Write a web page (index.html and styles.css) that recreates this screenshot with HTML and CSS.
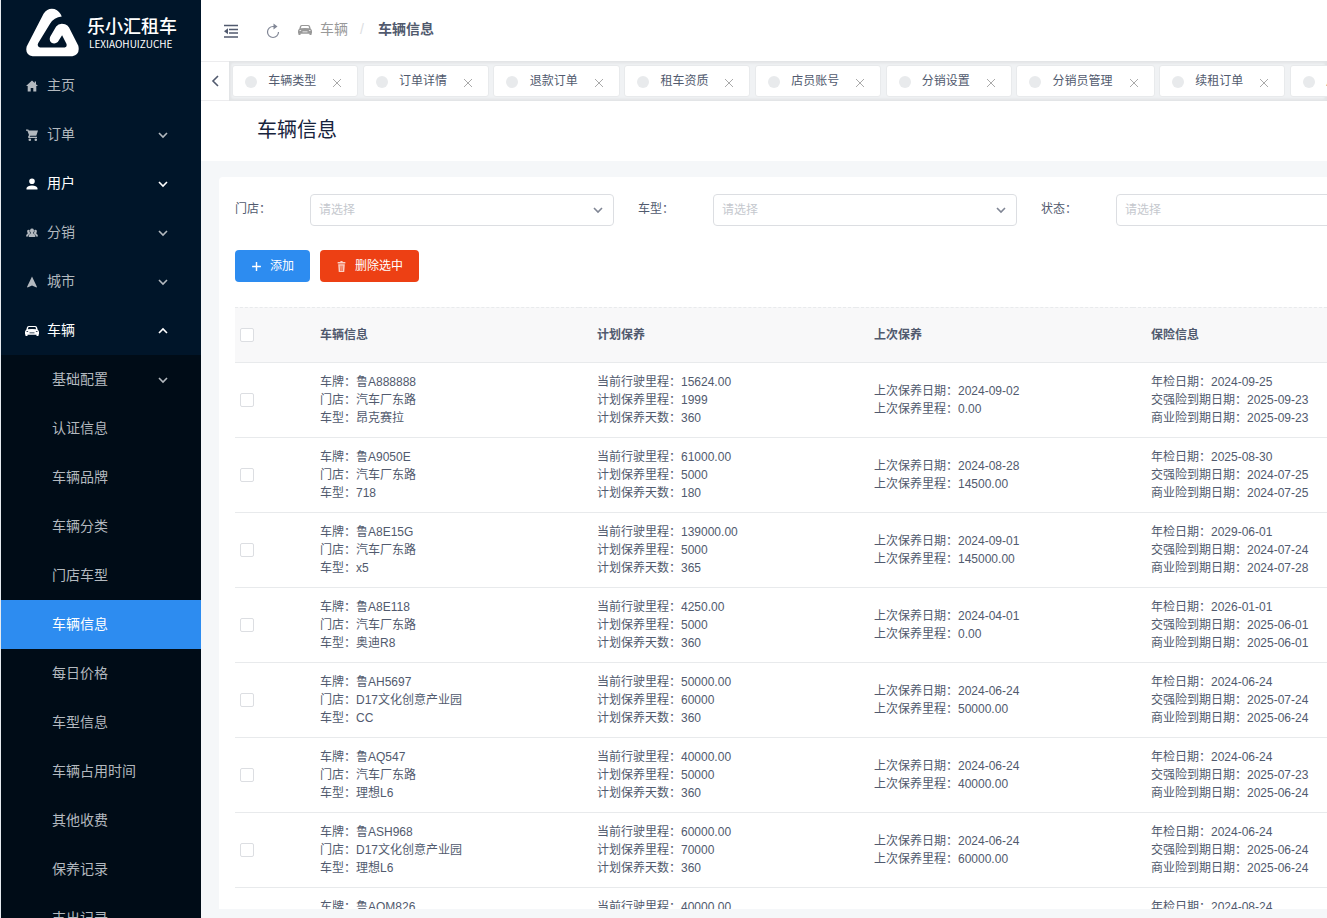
FILE: index.html
```html
<!DOCTYPE html>
<html lang="zh-CN">
<head>
<meta charset="utf-8">
<title>车辆信息</title>
<link rel="stylesheet" href="styles.css">
</head>
<body>
<svg class="sprite" aria-hidden="true">
  <symbol id="chevron" viewBox="0 0 12 12"><path d="M2 4l4 4 4-4" fill="none" stroke="currentColor" stroke-width="1.6"/></symbol>
  <symbol id="close" viewBox="0 0 10 10"><path d="M1 1l8 8M9 1L1 9" fill="none" stroke="currentColor"/></symbol>
  <symbol id="car" viewBox="0 0 14 12"><path fill="currentColor" fill-rule="evenodd" d="M4 1h6q1.500 0 2 1.200L12.800 5q1.200.6 1.200 2v2.500h-.5V11h-2V9.800H2.500V11h-2V9.500H0V7q0-1.400 1.200-2L2 2.200Q2.500 1 4 1zM3.600 2L2.800 4.300Q7 3.500 11.200 4.300L10.400 2zM1.500 6.200v.9h1.600v-.9zM10.900 6.200v.9h1.600v-.9zM4.500 7.500v.7h5v-.7z"/></symbol>
</svg>
<div class="app">
  <aside class="sidebar">
    <div class="logo">
      <svg class="logo-mark" viewBox="18 10 160 148"><path fill="#fff" d="M71 27Q84 8 104 13Q120 19 126 36Q102 39 91 57L55 116Q50 126 60 129L135 129Q143 127 140 118L127 92L114 113Q104 121 94 114Q87 108 91 97L109 66Q118 54 136 59Q144 62 148 69L176 124Q182 150 158 156L38 156Q14 152 20 126Z"/></svg>
      <div class="logo-text"><strong>乐小汇租车</strong><span>LEXIAOHUIZUCHE</span></div>
    </div>
    <nav>
      <ul class="menu">
        <li><a href="#"><svg class="mi" viewBox="-1 -1 14 14"><path fill="currentColor" d="M6 .5L0 6h1.700v5.500h3V8h2.600v3.500h3V6H12L10 4.200V1.500H8.700V3z"/></svg>主页</a></li>
        <li><a href="#"><svg class="mi" viewBox="-1 -1 14 14"><path fill="currentColor" d="M0 .5h2.300l.5 1.100H12L10.300 6.700H4.200L3.700 7.800H11V9H2.500L2 8l1-2L1.400 1.700H0zM3.800 9.400a1.300 1.300 0 110 2.600 1.300 1.300 0 010-2.600zM9.800 9.400a1.300 1.300 0 110 2.600 1.300 1.300 0 010-2.600z"/></svg>订单<svg class="arrow"><use href="#chevron"/></svg></a></li>
        <li class="open"><a href="#"><svg class="mi" viewBox="-1 -1 14 14"><path fill="currentColor" d="M6 .5a2.800 2.800 0 110 5.600 2.800 2.800 0 010-5.600zM.5 11.500V10Q1.500 7.500 6 7.500T11.500 10v1.500z"/></svg>用户<svg class="arrow"><use href="#chevron"/></svg></a></li>
        <li><a href="#"><svg class="mi" viewBox="-1 -1 14 14"><path fill="currentColor" d="M6 1.500a2 2.200 0 011.300 3.900v1.200q2 .5 2 3.400H2.700q0-2.900 2-3.400V5.400A2 2.200 0 016 1.500zM2.600 2.700q.7 0 1.100.4-.5 1.600.4 2.900v.5Q2.300 7.300 2.100 9.500H0Q0 7.300 1.600 6.800V6Q.3 3 2.600 2.700zM9.400 2.700q-.7 0-1.100.4.500 1.600-.4 2.900v.5q1.800.8 2 3H12q0-2.200-1.600-2.700V6Q11.700 3 9.400 2.700z"/></svg>分销<svg class="arrow"><use href="#chevron"/></svg></a></li>
        <li><a href="#"><svg class="mi" viewBox="-1 -1 14 14"><path fill="currentColor" d="M6 .5L11 11l-.5.500L6 9.500l-4.500 2L1 11z"/></svg>城市<svg class="arrow"><use href="#chevron"/></svg></a></li>
        <li class="open"><a href="#"><svg class="mi"><use href="#car"/></svg>车辆<svg class="arrow up"><use href="#chevron"/></svg></a>
          <ul class="submenu">
            <li><a href="#">基础配置<svg class="arrow"><use href="#chevron"/></svg></a></li>
            <li><a href="#">认证信息</a></li>
            <li><a href="#">车辆品牌</a></li>
            <li><a href="#">车辆分类</a></li>
            <li><a href="#">门店车型</a></li>
            <li class="active"><a href="#">车辆信息</a></li>
            <li><a href="#">每日价格</a></li>
            <li><a href="#">车型信息</a></li>
            <li><a href="#">车辆占用时间</a></li>
            <li><a href="#">其他收费</a></li>
            <li><a href="#">保养记录</a></li>
            <li><a href="#">支出记录</a></li>
          </ul>
        </li>
      </ul>
    </nav>
  </aside>
  <main class="main">
    <header class="topbar">
      <button class="icon-btn" aria-label="收起菜单"><svg width="16" height="14" viewBox="0 0 16 14"><path d="M1 1.500h14M6 5.500h9M6 9h9M1 13h14" fill="none" stroke="currentColor" stroke-width="1.400"/><path d="M1 7.200l4-3v6z" fill="currentColor"/></svg></button>
      <button class="icon-btn refresh" aria-label="刷新"><svg width="14" height="16" viewBox="0 0 14 16"><path d="M8 3.500H7A5.500 5.500 0 1012.500 9" fill="none" stroke="currentColor" stroke-width="1.200"/><path d="M7.500.5l4 3-4 3z" fill="currentColor"/></svg></button>
      <nav class="crumbs"><svg width="14" height="12"><use href="#car"/></svg><span>车辆</span><i>/</i><b>车辆信息</b></nav>
    </header>
    <div class="tabs">
      <button class="tabs-prev" aria-label="向左"><svg width="9" height="12" viewBox="0 0 9 12"><path d="M7 1L2 6l5 5" fill="none" stroke="currentColor" stroke-width="1.600"/></svg></button>
      <div class="tabs-list">
        <div class="tab"><i></i> <span>车辆类型</span><button aria-label="关闭"><svg><use href="#close"/></svg></button></div>
        <div class="tab"><i></i> <span>订单详情</span><button aria-label="关闭"><svg><use href="#close"/></svg></button></div>
        <div class="tab"><i></i> <span>退款订单</span><button aria-label="关闭"><svg><use href="#close"/></svg></button></div>
        <div class="tab"><i></i> <span>租车资质</span><button aria-label="关闭"><svg><use href="#close"/></svg></button></div>
        <div class="tab"><i></i> <span>店员账号</span><button aria-label="关闭"><svg><use href="#close"/></svg></button></div>
        <div class="tab"><i></i> <span>分销设置</span><button aria-label="关闭"><svg><use href="#close"/></svg></button></div>
        <div class="tab"><i></i> <span>分销员管理</span><button aria-label="关闭"><svg><use href="#close"/></svg></button></div>
        <div class="tab"><i></i> <span>续租订单</span><button aria-label="关闭"><svg><use href="#close"/></svg></button></div>
        <div class="tab"><i></i> <span>用户列表</span><button aria-label="关闭"><svg><use href="#close"/></svg></button></div>
      </div>
    </div>
    <h1 class="title">车辆信息</h1>
    <div class="content">
      <section class="card">
        <form class="filters">
          <div class="field"><label for="store">门店：</label><div class="select"><select id="store"><option>请选择</option></select><svg><use href="#chevron"/></svg></div></div>
          <div class="field"><label for="model">车型：</label><div class="select"><select id="model"><option>请选择</option></select><svg><use href="#chevron"/></svg></div></div>
          <div class="field"><label for="state">状态：</label><div class="select"><select id="state"><option>请选择</option></select><svg><use href="#chevron"/></svg></div></div>
        </form>
        <div class="actions">
          <button class="btn primary"><svg viewBox="0 0 10 10"><path d="M5 1v8M1 5h8" stroke="currentColor" stroke-width="1.300"/></svg>添加</button>
          <button class="btn danger"><svg viewBox="0 0 10 10"><path fill="currentColor" fill-opacity=".75" fill-rule="evenodd" d="M1.500 1H4V0h2v1h2.500v1.200h-7zM2 3h6l-.5 7h-5zM3.500 4l.2 5h.5L4 4zM4.800 4v5h.4V4zM6 4l-.2 5h.5l.2-5z"/></svg>删除选中</button>
        </div>
        <table class="table">
          <colgroup><col class="c-check"><col class="c-data"><col class="c-data"><col class="c-data"><col></colgroup>
          <thead><tr><th><input type="checkbox" aria-label="全选"></th><th>车辆信息</th><th>计划保养</th><th>上次保养</th><th>保险信息</th></tr></thead>
          <tbody>
            <tr><td><input type="checkbox" aria-label="选择"></td><td>车牌：鲁A888888<br>门店：汽车厂东路<br>车型：昂克赛拉</td><td>当前行驶里程：15624.00<br>计划保养里程：1999<br>计划保养天数：360</td><td>上次保养日期：2024-09-02<br>上次保养里程：0.00</td><td>年检日期：2024-09-25<br>交强险到期日期：2025-09-23<br>商业险到期日期：2025-09-23</td></tr>
            <tr><td><input type="checkbox" aria-label="选择"></td><td>车牌：鲁A9050E<br>门店：汽车厂东路<br>车型：718</td><td>当前行驶里程：61000.00<br>计划保养里程：5000<br>计划保养天数：180</td><td>上次保养日期：2024-08-28<br>上次保养里程：14500.00</td><td>年检日期：2025-08-30<br>交强险到期日期：2024-07-25<br>商业险到期日期：2024-07-25</td></tr>
            <tr><td><input type="checkbox" aria-label="选择"></td><td>车牌：鲁A8E15G<br>门店：汽车厂东路<br>车型：x5</td><td>当前行驶里程：139000.00<br>计划保养里程：5000<br>计划保养天数：365</td><td>上次保养日期：2024-09-01<br>上次保养里程：145000.00</td><td>年检日期：2029-06-01<br>交强险到期日期：2024-07-24<br>商业险到期日期：2024-07-28</td></tr>
            <tr><td><input type="checkbox" aria-label="选择"></td><td>车牌：鲁A8E118<br>门店：汽车厂东路<br>车型：奥迪R8</td><td>当前行驶里程：4250.00<br>计划保养里程：5000<br>计划保养天数：360</td><td>上次保养日期：2024-04-01<br>上次保养里程：0.00</td><td>年检日期：2026-01-01<br>交强险到期日期：2025-06-01<br>商业险到期日期：2025-06-01</td></tr>
            <tr><td><input type="checkbox" aria-label="选择"></td><td>车牌：鲁AH5697<br>门店：D17文化创意产业园<br>车型：CC</td><td>当前行驶里程：50000.00<br>计划保养里程：60000<br>计划保养天数：360</td><td>上次保养日期：2024-06-24<br>上次保养里程：50000.00</td><td>年检日期：2024-06-24<br>交强险到期日期：2025-07-24<br>商业险到期日期：2025-06-24</td></tr>
            <tr><td><input type="checkbox" aria-label="选择"></td><td>车牌：鲁AQ547<br>门店：汽车厂东路<br>车型：理想L6</td><td>当前行驶里程：40000.00<br>计划保养里程：50000<br>计划保养天数：360</td><td>上次保养日期：2024-06-24<br>上次保养里程：40000.00</td><td>年检日期：2024-06-24<br>交强险到期日期：2025-07-23<br>商业险到期日期：2025-06-24</td></tr>
            <tr><td><input type="checkbox" aria-label="选择"></td><td>车牌：鲁ASH968<br>门店：D17文化创意产业园<br>车型：理想L6</td><td>当前行驶里程：60000.00<br>计划保养里程：70000<br>计划保养天数：360</td><td>上次保养日期：2024-06-24<br>上次保养里程：60000.00</td><td>年检日期：2024-06-24<br>交强险到期日期：2025-06-24<br>商业险到期日期：2025-06-24</td></tr>
            <tr><td><input type="checkbox" aria-label="选择"></td><td>车牌：鲁AQM826<br>门店：汽车厂东路<br>车型：理想L6</td><td>当前行驶里程：40000.00<br>计划保养里程：50000<br>计划保养天数：360</td><td>上次保养日期：2024-06-24<br>上次保养里程：40000.00</td><td>年检日期：2024-08-24<br>交强险到期日期：2025-06-24<br>商业险到期日期：2025-06-24</td></tr>
          </tbody>
        </table>
      </section>
    </div>
  </main>
</div>
</body>
</html>
```
FILE: styles.css
```css
* { box-sizing: border-box; }
body {
  margin: 0;
  color: #515a6e;
  background: #f5f7f9;
  font: 12px/18px "Liberation Sans", "Noto Sans CJK SC", sans-serif;
}
button, select, input { font: inherit; color: inherit; margin: 0; }
button { border: 0; background: none; padding: 0; cursor: pointer; }
ul { list-style: none; margin: 0; padding: 0; }
a { color: inherit; text-decoration: none; }
.sprite { display: none; }

.app { display: flex; height: 100vh; overflow: hidden; }

/* Sidebar */
.sidebar {
  flex: none;
  width: 201px;
  border-left: 1px solid #e6ebf0;
  background: #001529;
  color: #b3b9bf;
  font-size: 14px;
  overflow: hidden;
}
.logo { display: flex; align-items: center; gap: 8px; height: 61px; padding: 3px 0 0 25px; color: #fff; }
.logo-mark { width: 53px; height: 49px; }
.logo-text { display: flex; flex-direction: column; font-family: "Noto Sans CJK SC", sans-serif; }
.logo-text strong { font-size: 18px; line-height: 24px; font-weight: 500; }
.logo-text span { padding-left: 2px; font-size: 10px; line-height: 14px; font-weight: 400; }
.menu a { display: flex; align-items: center; height: 49px; padding: 0 32px 2px 24px; }
.mi { width: 14px; height: 14px; margin: 2px 8px 0 0; }
.arrow { width: 12px; height: 12px; margin: 2px 0 0 auto; }
.arrow.up { transform: rotate(180deg); }
.open > a { color: #fff; }
.submenu { background: #000c17; }
.submenu a { padding-left: 51px; }
.submenu .active a { background: #2d8cf0; color: #fff; }

/* Top area */
.main { flex: 1; min-width: 0; display: flex; flex-direction: column; overflow: hidden; }
.topbar { flex: none; display: flex; align-items: center; height: 61px; padding-left: 22px; background: #fff; }
.icon-btn { display: flex; }
.refresh { margin-left: 27px; color: #808695; }
.crumbs { display: flex; align-items: center; margin-left: 18px; padding-bottom: 3px; font-size: 14px; color: #999; }
.crumbs svg { margin-top: 2px; }
.crumbs span { margin-left: 8px; }
.crumbs i { margin: 0 14px 0 12px; font-style: normal; color: #dcdee2; }
.crumbs b { color: #515a6e; }

.tabs { flex: none; display: flex; height: 40px; background: #f0f2f4; }
.tabs-prev {
  flex: none;
  display: flex;
  align-items: center;
  justify-content: center;
  width: 28px;
  border: solid #ececee;
  border-width: 1px 0;
  background: #fff;
}
.tabs-list {
  flex: 1;
  min-width: 0;
  padding: 4px 3px;
  white-space: nowrap;
  overflow: hidden;
  box-shadow: inset 0 0 3px 2px rgba(100, 100, 100, .1);
}
.tab {
  display: inline-block;
  height: 32px;
  margin-right: 1px;
  padding: 0 12px;
  border: 1px solid #e8eaec;
  border-radius: 3px;
  background: #fff;
  line-height: 30px;
  vertical-align: top;
}
.tab i {
  display: inline-block;
  width: 12px;
  height: 12px;
  margin-right: 8px;
  border-radius: 50%;
  background: #e8eaec;
  vertical-align: middle;
}
.tab button { width: 16px; height: 16px; margin-left: 13px; color: #aaa; line-height: 16px; vertical-align: middle; }
.tab svg { display: block; width: 10px; height: 10px; margin: 3px auto 0; }

.title {
  flex: none;
  margin: 0;
  padding: 14px 56px 16px;
  background: #fff;
  color: #17233d;
  font-size: 20px;
  line-height: 30px;
  font-weight: 400;
}

/* Content card */
.content { flex: 1; min-height: 0; display: flex; padding: 16px 0 9px 18px; }
.card { flex: 1; min-width: 0; padding: 17px 0 0 16px; background: #fff; border-radius: 4px 0 0; overflow: hidden; }
.filters { display: flex; }
.field { flex: none; display: flex; width: 403px; }
.field label { width: 75px; line-height: 30px; }
.select { position: relative; width: 304px; }
.select select {
  appearance: none;
  width: 100%;
  height: 32px;
  padding: 0 24px 0 8px;
  border: 1px solid #dcdee2;
  border-radius: 4px;
  background: #fff;
  color: #c5c8ce;
}
.select svg { position: absolute; top: 10px; right: 10px; width: 12px; height: 12px; color: #808695; pointer-events: none; }
.actions { display: flex; gap: 10px; padding: 24px 0 25px; }
.btn { display: flex; align-items: center; height: 32px; padding: 0 16px; border-radius: 4px; color: #fff; }
.btn svg { width: 11px; height: 11px; margin-right: 8px; }
.primary { background: #2d8cf0; }
.danger { background: #ed4014; }

.table { width: 100%; table-layout: fixed; border-collapse: separate; border-spacing: 0; }
.c-check { width: 67px; }
.c-data { width: 277px; }
.table th, .table td {
  padding: 0 0 0 18px;
  border-bottom: 1px solid #e8eaec;
  text-align: left;
  vertical-align: middle;
  white-space: nowrap;
}
.table th { height: 56px; border-top: 1px dashed #e8eaec; background: #f8f8f9; font-weight: 700; }
.table td { height: 75px; }
.table th:first-child, .table td:first-child { padding-left: 5px; }
.table input {
  appearance: none;
  display: block;
  width: 14px;
  height: 14px;
  border: 1px solid #dcdee2;
  border-radius: 2px;
  background: #fff;
}
```
